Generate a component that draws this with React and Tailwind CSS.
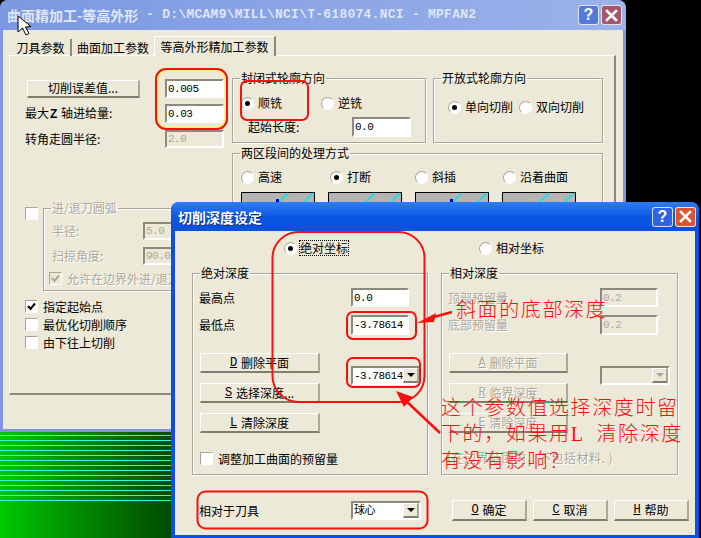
import React from "react";

const sunken = "border-2 border-t-[#8c8a7c] border-l-[#8c8a7c] border-r-white border-b-white";
const raised = "border border-t-white border-l-white border-r-[#aca899] border-b-[#807e70] border-b-2 border-r-2";
const muted = "text-[#aca899] [text-shadow:1px_1px_0_#fff]";

function Radio({ on, label, focus, className = "" }) {
  return (
    <label className={"flex items-center gap-[4px] h-[16px] " + className}>
      <span className="w-[13px] h-[13px] shrink-0 rounded-full bg-white border border-[#a8a698] border-r-white border-b-white flex items-center justify-center">
        {on && <span className="w-[5px] h-[5px] rounded-full bg-black" />}
      </span>
      <span className={focus ? "border border-dotted border-black -ml-[2px] leading-[14px]" : ""}>{label}</span>
    </label>
  );
}

function Check({ on, label, disabled, className = "" }) {
  return (
    <label className={"flex items-center gap-[5px] h-[13px] " + className}>
      <span className={"w-[13px] h-[13px] shrink-0 border border-[#a8a698] border-r-white border-b-white flex items-center justify-center " + (disabled ? "bg-[#ece9d8]" : "bg-white")}>
        {on && (
          <svg width="9" height="9" viewBox="0 0 9 9" fill="none" stroke={disabled ? "#aca899" : "#000"} strokeWidth="2">
            <path d="M1 4l2.5 3L8 1.5" />
          </svg>
        )}
      </span>
      {label && <span className={"whitespace-nowrap " + (disabled ? muted : "")}>{label}</span>}
    </label>
  );
}

function Field({ value, disabled, w = "w-[59px]", h = "h-[19px]", className = "" }) {
  return (
    <div className={`${w} ${h} ${sunken} shrink-0 flex items-center pl-[1px] font-['Liberation_Mono',monospace] text-[11px] tracking-[-0.5px] ${disabled ? "bg-[#ece9d8] text-[#aca899]" : "bg-white text-black"} ${className}`}>
      {value}
    </div>
  );
}

function Combo({ value, disabled, w = "w-[70px]", className = "" }) {
  return (
    <div className={`${w} h-[19px] ${sunken} flex items-stretch ${disabled ? "bg-[#ece9d8]" : "bg-white"} ${className}`}>
      <div className="flex-1 flex items-center pl-[1px] text-[11px] font-['Liberation_Mono','Noto_Sans_CJK_SC',monospace] tracking-[-0.5px]">{value}</div>
      <div className={`w-[16px] bg-[#ece9d8] ${raised} flex items-center justify-center`}>
        <span className={`w-0 h-0 border-x-[4px] border-x-transparent border-t-[4px] ${disabled ? "border-t-[#aca899]" : "border-t-black"}`} />
      </div>
    </div>
  );
}

function Btn({ label, hot, disabled, className = "" }) {
  return (
    <div className={`bg-[#ece9d8] ${raised} flex items-center justify-center gap-[4px] whitespace-nowrap ${disabled ? muted : "text-black"} ${className}`}>
      {hot && <span className="font-['Liberation_Mono',monospace] underline text-[12px]">{hot}</span>}
      <span>{label}</span>
    </div>
  );
}

function Group({ label, disabled, className = "", pad = "", children }) {
  return (
    <fieldset className={"min-w-0 border border-[#a9a697] shadow-[1px_1px_0_#fff,inset_1px_1px_0_#fff] " + className}>
      <legend className={"ml-[7px] px-[1px] h-[16px] leading-[16px] " + (disabled ? muted : "")}>{label}</legend>
      <div className={pad}>{children}</div>
    </fieldset>
  );
}

function CapButton({ color, children }) {
  return (
    <div className={`w-[21px] h-[20px] rounded-[3px] border border-white/80 flex items-center justify-center text-white ${color}`}>
      {children}
    </div>
  );
}

const Q = () => <span className="font-['Liberation_Sans',sans-serif] font-bold text-[16px] leading-none">?</span>;
const X = () => (
  <svg width="13" height="13" viewBox="0 0 13 13" stroke="#fff" strokeWidth="2.6" strokeLinecap="square">
    <path d="M2 2l9 9M11 2l-9 9" />
  </svg>
);

function Pic({ dot }) {
  return (
    <svg width="74" height="60" viewBox="0 0 74 60" className="block">
      <rect x="0.5" y="0.5" width="73" height="59" fill="#b4b4b4" stroke="#000" />
      <path d="M35 13L47 1M60 13L72 1" stroke="#00e8f0" strokeWidth="1.6" />
      {dot && <rect x="35" y="7" width="3" height="4" fill="#0000d0" />}
    </svg>
  );
}

function Wallpaper() {
  return (
    <div className="absolute left-0 top-[430px] w-[172px] h-[108px] bg-gradient-to-r from-[#00c800] to-[#004a00]">
      <div className="mt-[5px] h-[68px] bg-[repeating-linear-gradient(to_bottom,#30f8d8_0,#30f8d8_1px,transparent_1px,transparent_5px)]" />
    </div>
  );
}

function BackWindow() {
  return (
    <div className="absolute left-0 top-0 w-[626px] h-[432px] rounded-t-[8px] bg-[#8194e2] flex flex-col text-[12px] leading-[16px] text-black">
      <div className="h-[30px] shrink-0 rounded-t-[8px] bg-gradient-to-r from-[#7b98e0] to-[#9bb2ea] flex items-center pl-[7px] pr-[4px] text-[#dfe6f7]">
        <span className="text-[14px] font-bold whitespace-pre">曲面精加工-等高外形</span>
        <span className="ml-[8px] font-['Liberation_Mono',monospace] font-bold text-[13px] tracking-[0.25px] whitespace-pre">- D:\MCAM9\MILL\NCI\T-618074.NCI - MPFAN2</span>
        <div className="ml-auto flex gap-[2px]">
          <CapButton color="bg-[#5479dd]"><Q /></CapButton>
          <CapButton color="bg-[#a2576f]"><X /></CapButton>
        </div>
      </div>
      <div className="flex-1 mx-[3px] mb-[3px] bg-[#ece9d8] pt-[6px] pl-[6px]">
        <div className="flex items-end pl-[2px] h-[20px] relative z-10">
          <div className="h-[17px] w-[61px] flex items-center justify-center border-r-2 border-[#8c8a7c]">刀具参数</div>
          <div className="h-[17px] w-[82px] flex items-center justify-center">曲面加工参数</div>
          <div className="h-[20px] w-[122px] flex items-center justify-center bg-[#ece9d8] border border-b-0 border-white border-r-2 border-r-[#8c8a7c]">等高外形精加工参数</div>
        </div>
        <div className="-mt-[1px] w-[607px] h-[340px] border border-white border-r-2 border-r-[#8c8a7c] border-b-2 border-b-[#8c8a7c] flex">
          <div className="w-[222px] shrink-0 pt-[23px]">
            <div className="flex items-center h-[19px]">
              <Btn label="切削误差值..." className="ml-[17px] w-[113px] h-[18px]" />
              <Field value="0.005" className="ml-[25px]" />
            </div>
            <div className="flex items-center mt-[6px] h-[19px]">
              <span className="ml-[15px] w-[140px] whitespace-nowrap">最大<b className="font-['Liberation_Sans',sans-serif] mx-[1px]">Z</b> 轴进给量:</span>
              <Field value="0.03" />
            </div>
            <div className="flex items-center mt-[7px] h-[18px]">
              <span className="ml-[15px] w-[140px]">转角走圆半径:</span>
              <Field value="2.0" disabled h="h-[18px]" />
            </div>
            <div className="flex items-start mt-[52px]">
              <Check className="ml-[15px] mt-[7px]" />
              <Group label="进/退刀圆弧" disabled className="ml-[5px] w-[182px] h-[91px] shrink-0" pad="pl-[8px]">
                <div className="flex items-center mt-[6px] h-[18px]">
                  <span className={"w-[91px] " + muted}>半径:</span>
                  <Field value="5.0" disabled h="h-[18px]" />
                </div>
                <div className="flex items-center mt-[7px] h-[18px]">
                  <span className={"w-[91px] " + muted}>扫掠角度:</span>
                  <Field value="90.0" disabled h="h-[18px]" />
                </div>
                <Check on disabled label="允许在边界外进/退刀" className="mt-[7px] -ml-[3px]" />
              </Group>
            </div>
            <div className="ml-[15px] mt-[9px] flex flex-col gap-[5px]">
              <Check on label="指定起始点" />
              <Check label="最优化切削顺序" />
              <Check label="由下往上切削" />
            </div>
          </div>
          <div className="pt-[14px] w-[372px]">
            <div className="flex gap-[7px]">
              <Group label="封闭式轮廓方向" className="w-[194px] h-[73px]" pad="pl-[8px]">
                <div className="flex pt-[9px]">
                  <Radio on label="顺铣" />
                  <Radio label="逆铣" className="ml-[39px]" />
                </div>
                <div className="flex items-center mt-[6px] h-[20px]">
                  <span className="ml-[7px] w-[104px]">起始长度:</span>
                  <Field value="0.0" h="h-[20px]" />
                </div>
              </Group>
              <Group label="开放式轮廓方向" className="w-[170px] h-[73px]" pad="pl-[14px]">
                <div className="flex pt-[13px]">
                  <Radio on label="单向切削" />
                  <Radio label="双向切削" className="ml-[6px]" />
                </div>
              </Group>
            </div>
            <Group label="两区段间的处理方式" className="w-[371px] h-[130px] mt-[2px]" pad="pl-[8px]">
              <div className="grid grid-cols-[89px_85px_88px_1fr] pt-[8px]">
                <Radio label="高速" />
                <Radio on label="打断" />
                <Radio label="斜插" />
                <Radio label="沿着曲面" />
              </div>
              <div className="flex gap-[13px] mt-[7px]">
                <Pic dot />
                <Pic />
                <Pic dot />
                <Pic />
              </div>
            </Group>
          </div>
        </div>
      </div>
    </div>
  );
}

function FrontWindow() {
  return (
    <div className="absolute left-[171px] top-[202px] w-[528px] h-[336px] rounded-t-[8px] bg-[#0a50e6] flex flex-col text-[12px] leading-[16px] text-black">
      <div className="h-[29px] shrink-0 rounded-t-[8px] bg-gradient-to-b from-[#2f7cf6] via-[#0a58e4] to-[#0a50dc] flex items-center pl-[7px] pr-[3px]">
        <span className="text-[14px] font-bold text-white [text-shadow:1px_1px_0_#0a2a90]">切削深度设定</span>
        <div className="ml-auto flex gap-[2px]">
          <CapButton color="bg-[#2f62e4]"><Q /></CapButton>
          <CapButton color="bg-[#dc5430]"><X /></CapButton>
        </div>
      </div>
      <div className="flex-1 mx-[4px] mb-[3px] bg-[#ece9d8] pl-[17px]">
        <div className="flex pt-[9px]">
          <Radio on focus label="绝对坐标" className="ml-[92px]" />
          <Radio label="相对坐标" className="ml-[130px]" />
        </div>
        <div className="flex gap-[13px] mt-[9px]">
          <Group label="绝对深度" className="w-[236px] h-[210px]" pad="pl-[6px]">
            <div className="flex items-center mt-[7px] h-[19px]">
              <span className="w-[152px]">最高点</span>
              <Field value="0.0" w="w-[58px]" />
            </div>
            <div className="flex items-center mt-[8px] h-[20px]">
              <span className="w-[152px]">最低点</span>
              <Field value="-3.78614" w="w-[58px]" h="h-[20px]" />
            </div>
            <div className="flex mt-[18px]">
              <div className="ml-[1px] w-[120px] flex flex-col gap-[10px]">
                <Btn hot="D" label="删除平面" className="h-[20px]" />
                <Btn hot="S" label="选择深度..." className="h-[20px]" />
                <Btn hot="L" label="清除深度" className="h-[20px]" />
              </div>
              <Combo value="-3.78614" className="ml-[31px] mt-[13px]" />
            </div>
            <Check label="调整加工曲面的预留量" className="ml-[1px] mt-[19px]" />
          </Group>
          <Group label="相对深度" className="w-[237px] h-[210px]" pad="pl-[6px]">
            <div className="flex items-center mt-[7px] h-[19px]">
              <span className={"w-[152px] " + muted}>顶部预留量</span>
              <Field value="0.2" disabled w="w-[58px]" />
            </div>
            <div className="flex items-center mt-[8px] h-[20px]">
              <span className={"w-[152px] " + muted}>底部预留量</span>
              <Field value="0.2" disabled w="w-[58px]" h="h-[20px]" />
            </div>
            <div className="flex mt-[18px]">
              <div className="ml-[1px] w-[119px] flex flex-col gap-[10px]">
                <Btn hot="A" disabled label="删除平面" className="h-[20px]" />
                <Btn hot="R" disabled label="临界深度" className="h-[20px]" />
                <Btn hot="E" disabled label="清除深度" className="h-[20px]" />
              </div>
              <Combo disabled value="" className="ml-[32px] mt-[13px]" />
            </div>
            <div className={"mt-[17px] whitespace-pre tracking-[0.5px] -ml-[1px] " + muted}>(在边界范围内{"\uFF0C"}不包括材料. )</div>
          </Group>
        </div>
        <div className="flex items-center mt-[25px] h-[21px] pl-[7px]">
          <span className="w-[152px]">相对于刀具</span>
          <Combo value="球心" />
          <div className="flex gap-[6px] ml-[31px]">
            <Btn hot="O" label="确定" className="w-[75px] h-[21px]" />
            <Btn hot="C" label="取消" className="w-[75px] h-[21px]" />
            <Btn hot="H" label="帮助" className="w-[75px] h-[21px]" />
          </div>
        </div>
      </div>
    </div>
  );
}

function Marks() {
  const red = "#f80f0f";
  return (
    <svg width="701" height="538" viewBox="0 0 701 538" fill="none" className="absolute left-0 top-0 pointer-events-none">
      <rect x="157.5" y="70.5" width="68" height="57" rx="9" stroke="#fff36a" strokeWidth="2" />
      <rect x="156" y="69" width="71" height="60" rx="10" stroke={red} strokeWidth="2" />
      <rect x="241" y="81" width="67" height="39" rx="6" stroke={red} strokeWidth="2" />
      <rect x="272.500" y="232" width="152" height="170" rx="26" stroke={red} strokeWidth="2" />
      <rect x="347" y="312" width="69" height="27" rx="6" stroke={red} strokeWidth="2" />
      <rect x="347" y="358" width="73" height="29" rx="6" stroke={red} strokeWidth="2" />
      <rect x="197.500" y="491.500" width="230" height="37" rx="8" stroke={red} strokeWidth="2" />
      <path d="M452 312L430 318" stroke={red} strokeWidth="2.500" />
      <path d="M417 323L436 313L434 322Z" fill={red} />
      <path d="M440 433L404 399" stroke={red} strokeWidth="2.500" />
      <path d="M396 391L413 397L404 407Z" fill={red} />
      <path d="M18 16V32L22.500 28L26 35L29 33.500L25.500 27L31 26.500Z" fill="#fff" stroke="#000" strokeWidth="1" />
    </svg>
  );
}

function Note({ className = "", children }) {
  return (
    <div className={"absolute whitespace-pre text-[20px] leading-[24px] tracking-[1.600px] font-light text-[#f80f0f] " + className}>
      {children}
    </div>
  );
}

export default function App() {
  return (
    <div className="relative w-[701px] h-[538px] overflow-hidden bg-black font-['Noto_Sans_CJK_SC',sans-serif]">
      <Wallpaper />
      <BackWindow />
      <FrontWindow />
      <Marks />
      <Note className="left-[456px] top-[297px]">斜面的底部深度</Note>
      <Note className="left-[441px] top-[395px]">这个参数值选择深度时留</Note>
      <Note className="left-[441px] top-[421px]">下的{"\uFF0C"}如果用<b className="font-['Liberation_Serif',serif]">L</b>{"  "}清除深度</Note>
      <Note className="left-[441px] top-[448px]">有没有影响{"\uFF1F"}</Note>
    </div>
  );
}
